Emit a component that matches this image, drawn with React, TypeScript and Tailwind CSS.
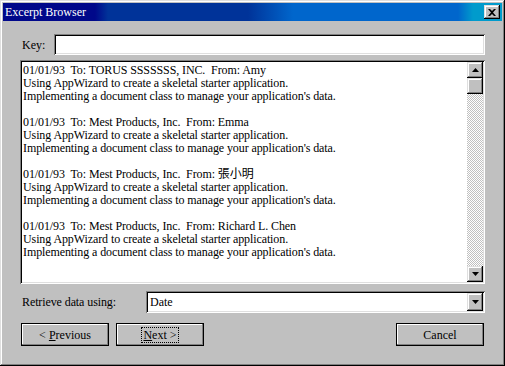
import React from "react";

const font = { fontFamily: '"Liberation Serif", "Noto Sans CJK TC", serif' };

function Tri({ down = false }: { down?: boolean }) {
  return (
    <svg width="7" height="4" viewBox="0 0 7 4" className="block">
      {down ? <polygon points="0,0 7,0 3.5,4" fill="#000" /> : <polygon points="3.5,0 7,4 0,4" fill="#000" />}
    </svg>
  );
}

const raised =
  "bg-[#c0c0c0] shadow-[inset_-1px_-1px_#000,inset_1px_1px_#dfdfdf,inset_-2px_-2px_#808080,inset_2px_2px_#fff]";
const sunken =
  "shadow-[inset_1px_1px_#808080,inset_-1px_-1px_#fff,inset_2px_2px_#000,inset_-2px_-2px_#dfdfdf]";

const entries = [
  "01/01/93  To: TORUS SSSSSSS, INC.  From: Amy",
  "01/01/93  To: Mest Products, Inc.  From: Emma",
  "01/01/93  To: Mest Products, Inc.  From: 張小明",
  "01/01/93  To: Mest Products, Inc.  From: Richard L. Chen",
];

function Btn({ children }: { children: React.ReactNode }) {
  return (
    <div className="w-[88px] h-[23px] border border-black bg-[#c0c0c0] shadow-[inset_-1px_-1px_#808080,inset_1px_1px_#fff] flex items-center justify-center text-[12px] text-black leading-none">
      {children}
    </div>
  );
}

export default function App() {
  return (
    <div
      style={font}
      className="w-[505px] h-[366px] bg-[#c0c0c0] p-[3px] flex flex-col text-black text-[12px] shadow-[inset_-1px_-1px_#000,inset_1px_1px_#dfdfdf,inset_-2px_-2px_#808080,inset_2px_2px_#fff]"
    >
      {/* title bar */}
      <div className="h-[18px] flex items-center justify-between pl-[2px] pr-[2px] bg-[linear-gradient(90deg,#00088a_0px,#00088a_92px,#003399_105px,#003399_245px,#0066cc_290px,#0066cc_455px,#009bcc_470px,#009bcc_100%)]">
        <span className="text-white text-[12px] leading-none">Excerpt Browser</span>
        <div className={`w-[16px] h-[14px] ${raised} flex items-center justify-center`}>
          <svg width="8" height="7" viewBox="0 0 8 7" className="block">
            <path d="M0 0 L2 0 L4 2 L6 0 L8 0 L5 3.5 L8 7 L6 7 L4 5 L2 7 L0 7 L3 3.5 Z" fill="#000" />
          </svg>
        </div>
      </div>

      <div className="flex-1 flex flex-col pl-[17px] pr-[17px]">
        {/* key row */}
        <div className="mt-[13px] flex items-center h-[21px]">
          <span className="w-[34px] pl-[2px]">Key:</span>
          <div className={`flex-1 h-[21px] bg-white ${sunken}`} />
        </div>

        {/* list box */}
        <div className={`mt-[5px] h-[224px] bg-white ${sunken} p-[2px] flex`}>
          <div className="flex-1 pl-[1px] pt-[2px] overflow-hidden tracking-[-0.1px]">
            {entries.map((e, i) => (
              <div key={i} className="mb-[13px]">
                <div className="h-[13px] leading-[13px] whitespace-pre">{e}</div>
                <div className="h-[13px] leading-[13px] whitespace-pre">
                  Using AppWizard to create a skeletal starter application.
                </div>
                <div className="h-[13px] leading-[13px] whitespace-pre">
                  Implementing a document class to manage your application's data.
                </div>
              </div>
            ))}
          </div>
          <div className="w-[16px] flex flex-col">
            <div className={`h-[16px] ${raised} flex items-center justify-center`}>
              <Tri />
            </div>
            <div className={`h-[16px] ${raised}`} />
            <div className="flex-1 bg-[repeating-conic-gradient(#c0c0c0_0_25%,#fff_0_50%)] bg-[length:2px_2px]" />
            <div className={`h-[16px] ${raised} flex items-center justify-center`}>
              <Tri down />
            </div>
          </div>
        </div>

        {/* retrieve row */}
        <div className="mt-[7px] flex items-center h-[22px]">
          <span className="w-[126px] pl-[2px] whitespace-nowrap tracking-[-0.1px]">Retrieve data using:</span>
          <div className={`flex-1 h-[22px] bg-white ${sunken} p-[2px] flex items-center`}>
            <span className="flex-1 pl-[2px] leading-none">Date</span>
            <div className={`w-[16px] h-[18px] ${raised} flex items-center justify-center`}>
              <Tri down />
            </div>
          </div>
        </div>

        {/* buttons */}
        <div className="mt-[10px] flex items-center pl-[1px] pr-[1px] gap-[7px]">
          <Btn>
            &lt; <span className="underline ml-[3px]">P</span>revious
          </Btn>
          <Btn>
            <span className="outline outline-1 outline-dotted outline-black px-[1px] py-[1px]">
              <span className="underline">N</span>ext &gt;
            </span>
          </Btn>
          <div className="flex-1" />
          <Btn>Cancel</Btn>
        </div>
      </div>
    </div>
  );
}
